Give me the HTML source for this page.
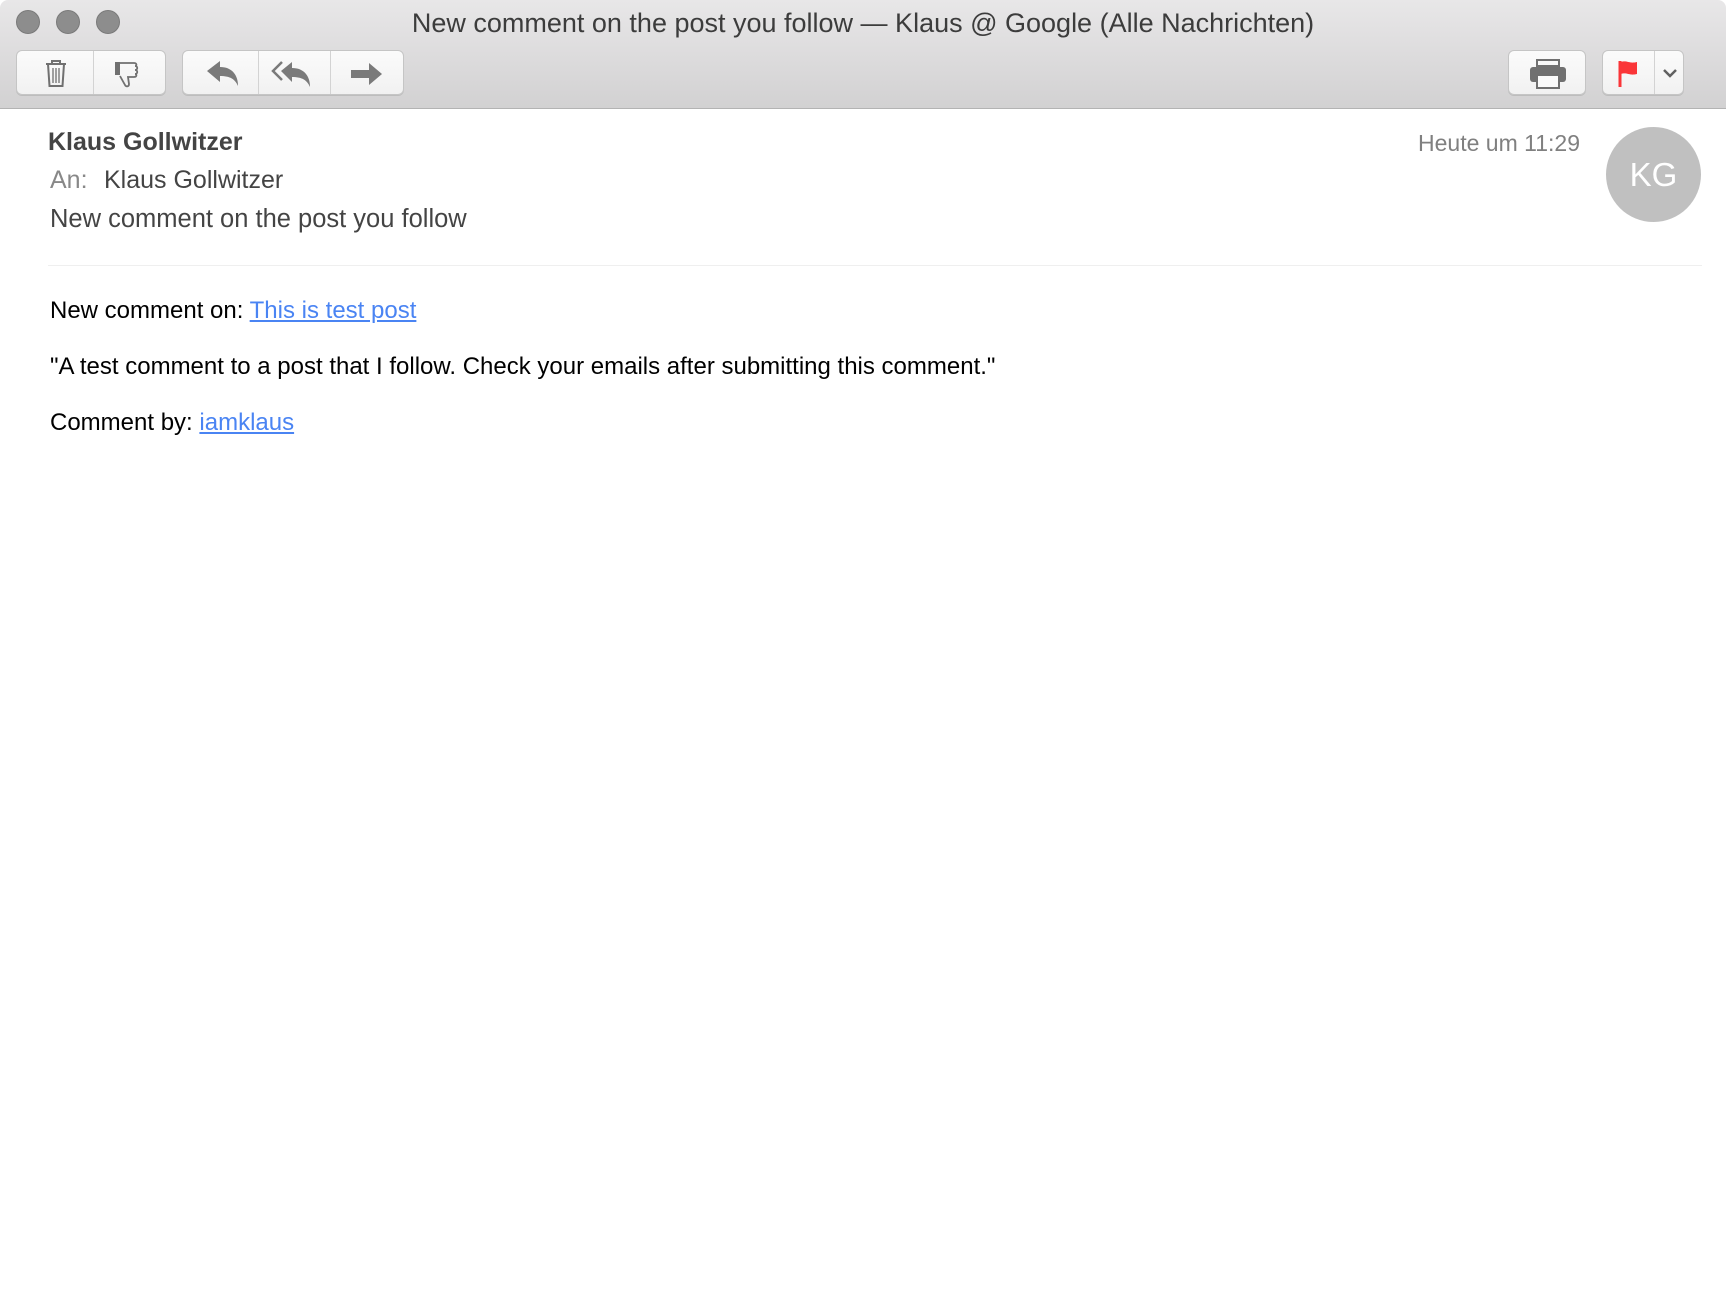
<!DOCTYPE html>
<html><head><meta charset="utf-8"><style>
*{margin:0;padding:0;box-sizing:border-box}
body{width:1726px;height:1312px;background:#fff;font-family:"Liberation Sans",Arial,sans-serif;position:relative;overflow:hidden}
.tb{position:absolute;left:0;top:0;width:1726px;height:109px;background:linear-gradient(#e8e7e8,#d2d1d2);border-bottom:1px solid #b3b3b3;border-top-left-radius:8px;border-top-right-radius:8px}
.dot{position:absolute;top:10px;width:24px;height:24px;border-radius:50%;background:#8d8d8d;border:1px solid #7a7a7a}
.title{position:absolute;top:8px;left:0;width:1726px;text-align:center;font-size:27px;color:#3c3c3c}
.grp{position:absolute;top:50px;height:45px;background:linear-gradient(#fbfbfb,#f1f1f1);border:1px solid #c5c5c5;border-radius:6px;box-shadow:0 1px 0 #bdbdbd}
.div{position:absolute;top:0;width:1px;height:43px;background:#d3d3d3}
svg{position:absolute}
.t{position:absolute;white-space:nowrap}
a{color:#4a84f3;text-decoration:underline}
</style></head><body>
<div class="tb">
<div class="dot" style="left:16px"></div><div class="dot" style="left:56px"></div><div class="dot" style="left:96px"></div>
<div class="title">New comment on the post you follow — Klaus @ Google (Alle Nachrichten)</div>
<div class="grp" style="left:16px;width:150px"><div class="div" style="left:76px"></div>
<svg style="left:24px;top:6px" width="30" height="32" viewBox="0 0 30 32"><path d="M5 7h20M11 7V4h8v3M7 7l1.5 22h13L23 7" fill="none" stroke="#707070" stroke-width="2"/><path d="M12 11v15M15 11v15M18 11v15" stroke="#707070" stroke-width="1.3"/></svg>
<svg style="left:94px;top:8px" width="36" height="32" viewBox="0 0 36 32"><rect x="4" y="3" width="5" height="13" fill="#707070"/><path d="M9 4h14c3 0 3 3 1 3c3 0 3 4 0 4c3 0 3 4 0 4c2 0 2 3-1 3h-6l1 7c0 3-3 3-4 1l-5-9" fill="none" stroke="#707070" stroke-width="1.8"/></svg>
</div>
<div class="grp" style="left:182px;width:222px"><div class="div" style="left:75px"></div><div class="div" style="left:147px"></div>
<svg style="left:22px;top:8px" width="36" height="30" viewBox="0 0 36 30"><path d="M2 12L15 2v6c12 0 18 8 18 19c-3-7-8-10-18-10v6z" fill="#7a7a7a"/></svg>
<svg style="left:88px;top:8px" width="44" height="30" viewBox="0 0 44 30"><path d="M10 12L21 3v6c12 0 18 8 18 19c-3-7-8-10-18-10v5z" fill="#7a7a7a"/><path d="M11 3L2 12l9 9" fill="none" stroke="#7a7a7a" stroke-width="2.5"/></svg>
<svg style="left:166px;top:10px" width="36" height="26" viewBox="0 0 36 26"><path d="M2 9h18V2l13 11-13 11v-7H2z" fill="#7a7a7a"/></svg>
</div>
<div class="grp" style="left:1508px;width:78px">
<svg style="left:20px;top:8px" width="38" height="30" viewBox="0 0 38 30"><rect x="8" y="1" width="22" height="6" fill="none" stroke="#707070" stroke-width="2"/><rect x="1" y="8" width="36" height="15" rx="3" fill="#707070"/><rect x="8" y="16" width="22" height="13" fill="#fafafa" stroke="#707070" stroke-width="2"/></svg>
</div>
<div class="grp" style="left:1602px;width:82px"><div class="div" style="left:51px"></div>
<svg style="left:14px;top:8px" width="24" height="30" viewBox="0 0 24 30"><path d="M3 2v26" stroke="#fa3538" stroke-width="3"/><path d="M4 3c6-2 8 2 16 0v12c-8 2-10-2-16 0z" fill="#fa3538"/></svg>
<svg style="left:59px;top:16px" width="16" height="12" viewBox="0 0 16 12"><path d="M2 3l6 6 6-6" fill="none" stroke="#606060" stroke-width="2.5"/></svg>
</div>
</div>
<div class="t" style="left:48px;top:128px;font-size:25px;font-weight:bold;color:#444">Klaus Gollwitzer</div>
<div class="t" style="left:50px;top:166px;font-size:25px;color:#888">An:</div>
<div class="t" style="left:104px;top:166px;font-size:25px;color:#444">Klaus Gollwitzer</div>
<div class="t" style="left:50px;top:205px;font-size:25.5px;color:#444">New comment on the post you follow</div>
<div class="t" style="left:1400px;top:130px;width:180px;text-align:right;font-size:23px;color:#808080">Heute um 11:29</div>
<div style="position:absolute;left:1606px;top:127px;width:95px;height:95px;border-radius:50%;background:#c0c0c0;color:#fff;font-size:33px;text-align:center;line-height:95px">KG</div>
<div style="position:absolute;left:48px;top:265px;width:1654px;height:1px;background:#efefef"></div>
<div class="t" style="left:50px;top:297px;font-size:24px;color:#000">New comment on: <a>This is test post</a></div>
<div class="t" style="left:50px;top:353px;font-size:24px;color:#000">"A test comment to a post that I follow. Check your emails after submitting this comment."</div>
<div class="t" style="left:50px;top:409px;font-size:24px;color:#000">Comment by: <a>iamklaus</a></div>
</body></html>
